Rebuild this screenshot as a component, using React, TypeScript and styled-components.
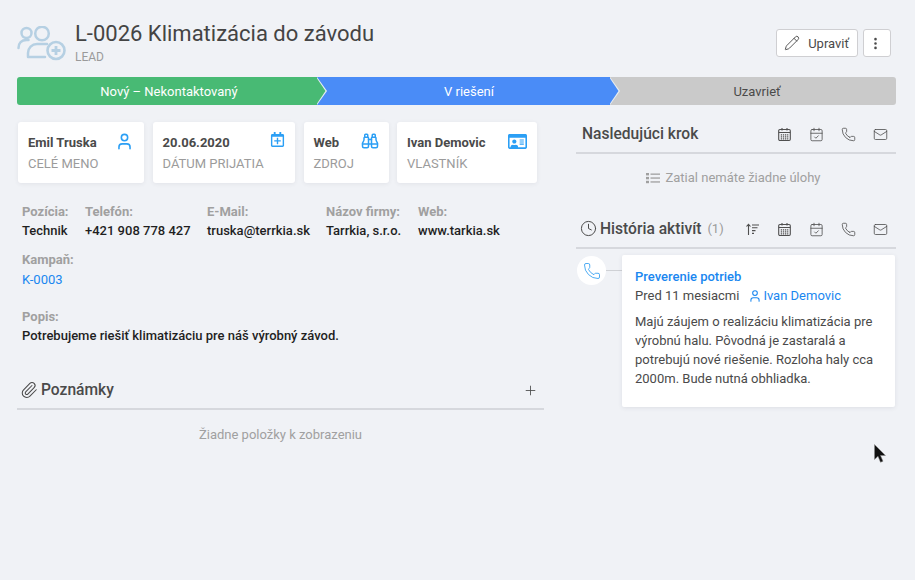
import React from "react";
import styled, { createGlobalStyle } from "styled-components";
import {
  User,
  Binoculars,
  CalendarCheck,
  Phone,
  Mail,
  Pencil,
  Paperclip,
  Clock,
  Plus,
  EllipsisVertical,
} from "lucide-react";
import { FaRegCalendarPlus, FaRegIdCard } from "react-icons/fa";

const Global = createGlobalStyle`
  html, body { margin: 0; padding: 0; background: #f0f2f6; }
  body { font-family: Roboto, "Liberation Sans", sans-serif; color: #4a4a4a; }
  * { box-sizing: border-box; }
`;

const Page = styled.div`
  position: relative;
  width: 915px;
  height: 580px;
  overflow: hidden;
  padding: 18px 19px 0 17px;
`;

const Header = styled.header`
  display: flex;
  align-items: flex-start;
  height: 59px;
`;

const HeaderText = styled.div`
  margin-left: 9px;
  flex: 1;
`;

const Title = styled.h1`
  margin: 1px 0 0;
  font-size: 22px;
  line-height: 30px;
  font-weight: 400;
  color: #444;
`;

const Subtitle = styled.div`
  margin-top: 1px;
  font-size: 12px;
  line-height: 15px;
  color: #9a9a9a;
`;

const HeaderActions = styled.div`
  display: flex;
  gap: 5px;
  margin: 11px 5px 0 0;
`;

const GhostButton = styled.button`
  display: flex;
  align-items: center;
  justify-content: center;
  gap: 8px;
  height: 28px;
  padding: 0 8px 0 7px;
  background: #fff;
  border: 1px solid #cfcfd2;
  border-radius: 3px;
  font: 400 13px Roboto, sans-serif;
  color: #4a4a4a;
`;

const SquareButton = styled(GhostButton)`
  width: 28px;
  padding: 0 3px 0 0;
`;

const Stages = styled.div`
  display: flex;
  height: 28px;
  border-radius: 3px;
  overflow: hidden;
`;

const Stage = styled.div<{ $bg: string; $w: number; $fg: string; $chev: boolean; $pl: number }>`
  position: relative;
  flex: ${(p) => (p.$w ? `0 0 ${p.$w}px` : "1")};
  display: flex;
  align-items: center;
  justify-content: center;
  padding-left: ${(p) => p.$pl}px;
  background: ${(p) => p.$bg};
  color: ${(p) => p.$fg};
  font-size: 13px;
  ${(p) =>
    p.$chev
      ? `&::before, &::after {
    content: "";
    position: absolute;
    top: 0;
    height: 100%;
    clip-path: polygon(0 0, 100% 50%, 0 100%);
  }
  &::before {
    z-index: 2;
    left: 100%;
    width: 10px;
    background: #e8eef2;
  }
  &::after {
    z-index: 3;
    left: 100%;
    margin-left: -1px;
    width: 9.5px;
    background: ${p.$bg};
  }`
      : ""}
`;

const Columns = styled.div`
  display: flex;
  gap: 32px;
  margin-top: 17px;
`;

const LeftColumn = styled.div`
  width: 527px;
`;

const RightColumn = styled.div`
  width: 320px;
`;

const Cards = styled.div`
  display: flex;
  gap: 8.5px;
  margin-left: 1px;
`;

const InfoCard = styled.div<{ $w: number }>`
  width: ${(p) => p.$w}px;
  height: 61px;
  background: #fff;
  border-radius: 3px;
  box-shadow: 0 1px 4px rgba(60, 60, 80, 0.08);
  padding: 12px 10px 0;
`;

const CardTop = styled.div`
  display: flex;
  justify-content: space-between;
  align-items: flex-start;
  height: 21px;
  font-size: 13px;
  line-height: 17px;
  font-weight: 700;
  color: #4a4a4a;
  svg { color: #2b9ff5; flex: none; margin-top: -2px; }
`;

const CardLabel = styled.div`
  font-size: 13px;
  line-height: 17px;
  color: #9b9b9b;
`;

const Fields = styled.div`
  display: flex;
  flex-wrap: wrap;
  margin: 19px 0 0 5px;
`;

const Field = styled.div<{ $w?: number; $mb: number }>`
  width: ${(p) => (p.$w ? `${p.$w}px` : "100%")};
  margin-bottom: ${(p) => p.$mb}px;
  font-size: 13px;
  line-height: 19px;
`;

const FieldLabel = styled.div`
  font-weight: 700;
  color: #a0a0a0;
`;

const FieldValue = styled.div`
  font-weight: 500;
  color: #1f1f1f;
  white-space: nowrap;
`;

const FieldLink = styled.a`
  display: block;
  margin-top: 1px;
  color: #1a87f0;
  text-decoration: none;
`;

const Section = styled.section<{ $top: number }>`
  margin-top: ${(p) => p.$top}px;
`;

const SectionHead = styled.div`
  display: flex;
  align-items: center;
  height: 34px;
  border-bottom: 2px solid #d6d8dd;
  padding-bottom: 5px;
`;

const SectionTitle = styled.h2<{ $indent?: number }>`
  display: flex;
  align-items: center;
  gap: 3px;
  flex: 1;
  margin: 0 0 0 ${(p) => p.$indent ?? 0}px;
  font-size: 15.6px;
  font-weight: 500;
  color: #4a4a4a;
  white-space: nowrap;
`;

const Count = styled.span`
  margin-left: 3px;
  font-size: 13px;
  font-weight: 400;
  color: #9b9b9b;
`;

const Empty = styled.div<{ $mt: number; $pr?: number }>`
  display: flex;
  align-items: center;
  justify-content: center;
  gap: 5px;
  margin-top: ${(p) => p.$mt}px;
  padding-right: ${(p) => p.$pr ?? 0}px;
  font-size: 13px;
  line-height: 17px;
  color: #a0a0a0;
`;

const ActionIcons = styled.div<{ $mr: number }>`
  display: flex;
  gap: 17px;
  margin: 1px ${(p) => p.$mr}px 0 0;
  color: #4f4f4f;
`;

const Timeline = styled.div`
  display: flex;
  align-items: flex-start;
  margin-top: 6px;
`;

const Bubble = styled.div`
  flex: none;
  width: 29px;
  height: 29px;
  margin: 1px 0 0 1px;
  border-radius: 50%;
  background: #fff;
  color: #3aa3f2;
  display: flex;
  align-items: center;
  justify-content: center;
`;

const Connector = styled.div`
  flex: none;
  width: 16px;
  height: 1px;
  margin-top: 15px;
  background: #cfd1d5;
`;

const ActivityCard = styled.div`
  width: 273px;
  height: 152px;
  background: #fff;
  border-radius: 2px;
  box-shadow: 0 1px 4px rgba(60, 60, 80, 0.1);
  padding: 12px 13px;
  font-size: 13px;
  line-height: 19px;
`;

const ActivityTitle = styled.div`
  font-weight: 500;
  color: #1a87f0;
`;

const ActivityMeta = styled.div`
  display: flex;
  align-items: center;
  color: #4a4a4a;
`;

const Owner = styled.span`
  display: inline-flex;
  align-items: center;
  gap: 1px;
  margin-left: 9px;
  color: #1a87f0;
`;

const ActivityBody = styled.p`
  margin: 7px 0 0;
  color: #4a4a4a;
`;

const Cursor = styled.svg`
  position: absolute;
  left: 874px;
  top: 444px;
`;

const LeadIcon = () => (
  <svg width="49" height="36" viewBox="0 0 49 36" fill="none" stroke="#b6d0e3" strokeWidth="2.5" style={{ marginTop: 8, flex: "none" }}>
    <circle cx="9.5" cy="7" r="5" />
    <path d="M1.500 22c0-5 3-8 8-8h2" strokeLinecap="round" />
    <circle cx="25" cy="7.500" r="6.800" />
    <path d="M11 31v-4c0-5 4-9 9-9h10M11 31h17" strokeLinecap="round" />
    <circle cx="39" cy="24.500" r="8.500" strokeWidth="2.600" />
    <path d="M39 20v9M34.500 24.500h9" strokeWidth="2.800" />
  </svg>
);

const CalendarGrid = ({ size = 15 }: { size?: number }) => (
  <svg width={size} height={size} viewBox="0 0 15 15" fill="none" stroke="currentColor" strokeWidth="1.100">
    <rect x="1.700" y="2.500" width="11.600" height="11" rx="1.200" />
    <path d="M1.700 5.500h11.600M5 1v2.500M10 1v2.500" />
    <path d="M3.800 7.800h7.500M3.800 9.800h7.500M3.800 11.800h7.500" strokeDasharray="1.300 .8" strokeWidth="1.300" />
  </svg>
);

const SortIcon = () => (
  <svg width="15" height="15" viewBox="0 0 15 15" fill="none" stroke="currentColor" strokeWidth="1.100">
    <path d="M3.500 13V2.500M1.500 4.500l2-2.200 2 2.200M7 3h7M7 5.800h5.500M7 8.600h3.500M7 11.400h2" />
  </svg>
);

const TaskList = () => (
  <svg width="14" height="12" viewBox="0 0 14 12" fill="#a0a0a0">
    <rect x="0" y="1" width="3" height="2.400" />
    <rect x="0" y="4.900" width="3" height="2.400" />
    <rect x="0" y="8.800" width="3" height="2.400" />
    <rect x="4.500" y="1.500" width="9.500" height="1.300" />
    <rect x="4.500" y="5.400" width="9.500" height="1.300" />
    <rect x="4.500" y="9.300" width="9.500" height="1.300" />
  </svg>
);

const RowIcons = () => (
  <>
    <CalendarGrid />
    <CalendarCheck size={15} strokeWidth={1.300} />
    <Phone size={15} strokeWidth={1.300} />
    <Mail size={15} strokeWidth={1.300} />
  </>
);

export default function App() {
  return (
    <Page>
      <Global />
      <Header>
        <LeadIcon />
        <HeaderText>
          <Title>L-0026 Klimatizácia do závodu</Title>
          <Subtitle>LEAD</Subtitle>
        </HeaderText>
        <HeaderActions>
          <GhostButton>
            <Pencil size={16} strokeWidth={1.400} />
            Upraviť
          </GhostButton>
          <SquareButton>
            <EllipsisVertical size={15} strokeWidth={2.200} />
          </SquareButton>
        </HeaderActions>
      </Header>

      <Stages>
        <Stage $bg="#48ba74" $w={300} $fg="#fff" $chev $pl={4}>Nový – Nekontaktovaný</Stage>
        <Stage $bg="#4a8cf7" $w={293} $fg="#fff" $chev $pl={11}>V riešení</Stage>
        <Stage $bg="#cacaca" $w={0} $fg="#4a4a4a" $chev={false} $pl={8}>Uzavrieť</Stage>
      </Stages>

      <Columns>
        <LeftColumn>
          <Cards>
            <InfoCard $w={126}>
              <CardTop>Emil Truska <User size={19} strokeWidth={2} /></CardTop>
              <CardLabel>CELÉ MENO</CardLabel>
            </InfoCard>
            <InfoCard $w={142.5}>
              <CardTop>20.06.2020 <FaRegCalendarPlus size={15} /></CardTop>
              <CardLabel>DÁTUM PRIJATIA</CardLabel>
            </InfoCard>
            <InfoCard $w={85}>
              <CardTop>Web <Binoculars size={18} strokeWidth={2} /></CardTop>
              <CardLabel>ZDROJ</CardLabel>
            </InfoCard>
            <InfoCard $w={140}>
              <CardTop>Ivan Demovic <FaRegIdCard size={19} /></CardTop>
              <CardLabel>VLASTNÍK</CardLabel>
            </InfoCard>
          </Cards>

          <Fields>
            <Field $w={63} $mb={10}><FieldLabel>Pozícia:</FieldLabel><FieldValue>Technik</FieldValue></Field>
            <Field $w={122} $mb={10}><FieldLabel>Telefón:</FieldLabel><FieldValue>+421 908 778 427</FieldValue></Field>
            <Field $w={119} $mb={10}><FieldLabel>E-Mail:</FieldLabel><FieldValue>truska@terrkia.sk</FieldValue></Field>
            <Field $w={92} $mb={10}><FieldLabel>Názov firmy:</FieldLabel><FieldValue>Tarrkia, s.r.o.</FieldValue></Field>
            <Field $w={100} $mb={10}><FieldLabel>Web:</FieldLabel><FieldValue>www.tarkia.sk</FieldValue></Field>
            <Field $mb={18}><FieldLabel>Kampaň:</FieldLabel><FieldLink>K-0003</FieldLink></Field>
            <Field $mb={31}><FieldLabel>Popis:</FieldLabel><FieldValue>Potrebujeme riešiť klimatizáciu pre náš výrobný závod.</FieldValue></Field>
          </Fields>

          <Section $top={0}>
            <SectionHead>
              <SectionTitle $indent={3}>
                <Paperclip size={18} strokeWidth={1.400} />
                Poznámky
              </SectionTitle>
              <ActionIcons $mr={6}><Plus size={15} strokeWidth={1.400} /></ActionIcons>
            </SectionHead>
            <Empty $mt={16}>Žiadne položky k zobrazeniu</Empty>
          </Section>
        </LeftColumn>

        <RightColumn>
          <Section $top={-2}>
            <SectionHead>
              <SectionTitle $indent={6}>Nasledujúci krok</SectionTitle>
              <ActionIcons $mr={8}><RowIcons /></ActionIcons>
            </SectionHead>
            <Empty $mt={15} $pr={5}><TaskList />Zatial nemáte žiadne úlohy</Empty>
          </Section>
          <Section $top={29}>
            <SectionHead>
              <SectionTitle $indent={4}>
                <Clock size={17} strokeWidth={1.400} />
                História aktivít
                <Count>(1)</Count>
              </SectionTitle>
              <ActionIcons $mr={8}>
                <SortIcon />
                <RowIcons />
              </ActionIcons>
            </SectionHead>
            <Timeline>
              <Bubble><Phone size={18} strokeWidth={1.200} /></Bubble>
              <Connector />
              <ActivityCard>
                <ActivityTitle>Preverenie potrieb</ActivityTitle>
                <ActivityMeta>
                  Pred 11 mesiacmi
                  <Owner><User size={14} strokeWidth={1.800} />Ivan Demovic</Owner>
                </ActivityMeta>
                <ActivityBody>
                  Majú záujem o realizáciu klimatizácia pre výrobnú halu. Pôvodná je zastaralá a potrebujú nové riešenie. Rozloha haly cca 2000m. Bude nutná obhliadka.
                </ActivityBody>
              </ActivityCard>
            </Timeline>
          </Section>
        </RightColumn>
      </Columns>

      <Cursor width="14" height="20" viewBox="0 0 14 20">
        <path d="M0.500 0.500v15l3.500-3.200 2.500 6 2.500-1-2.500-5.800h5z" fill="#111" stroke="#888" strokeWidth=".5" />
      </Cursor>
    </Page>
  );
}
